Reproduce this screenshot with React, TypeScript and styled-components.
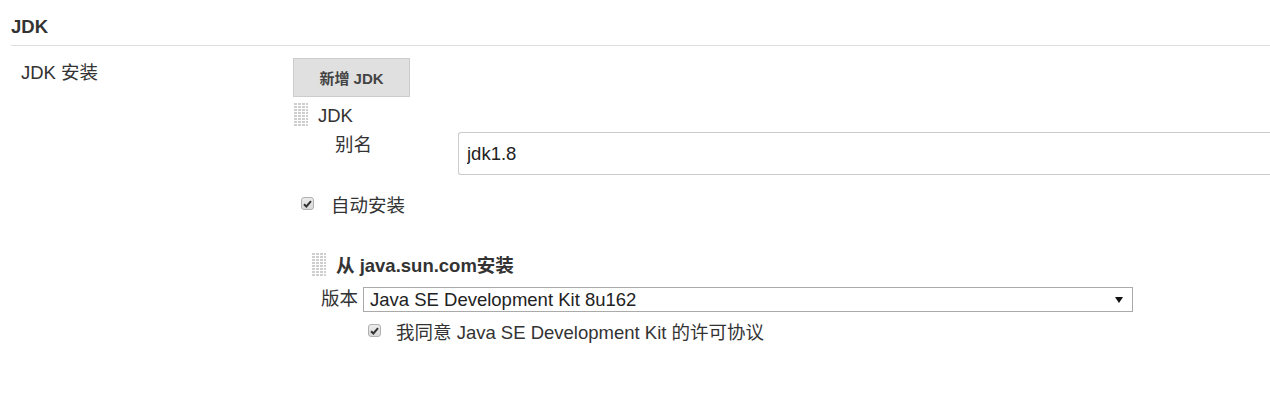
import React from "react";
import styled, { createGlobalStyle } from "styled-components";

const GlobalStyle = createGlobalStyle`
  html, body {
    margin: 0;
    padding: 0;
    background: #fff;
  }
  body {
    font-family: "Liberation Sans", Arial, "Noto Sans CJK SC", sans-serif;
    font-size: 18.5px;
    color: #333;
    overflow: hidden;
  }
`;

const Page = styled.div`
  width: 1270px;
  height: 414px;
  overflow: hidden;
`;

const SectionHeader = styled.div`
  margin-left: 11px;
  height: 46px;
  box-sizing: border-box;
  padding-top: 16px;
  border-bottom: 1px solid #e0e0e0;
  font-size: 18.5px;
  line-height: 21px;
  font-weight: bold;
  color: #333;
`;

const SettingRow = styled.div`
  display: flex;
  padding-top: 12px;
`;

const SettingName = styled.div`
  width: 293px;
  padding-left: 21px;
  box-sizing: border-box;
  padding-top: 4px;
  line-height: 21px;
  flex-shrink: 0;
`;

const SettingBody = styled.div`
  flex: 1;
  display: flex;
  flex-direction: column;
  align-items: flex-start;
`;

const AddButton = styled.button`
  width: 117px;
  height: 39px;
  background: #e0e0e0;
  border: 1px solid #cccccc;
  border-radius: 0;
  font-family: inherit;
  font-size: 15px;
  font-weight: bold;
  color: #444;
  padding: 0;
  cursor: pointer;
`;

const Repeated = styled.div<{ $indent?: number }>`
  align-self: stretch;
  margin-left: ${(p) => p.$indent ?? 0}px;
  display: flex;
  flex-direction: column;
`;

const ChunkHeader = styled.div<{ $bold?: boolean; $top: number }>`
  display: flex;
  align-items: center;
  gap: 10px;
  margin-top: ${(p) => p.$top}px;
  font-weight: ${(p) => (p.$bold ? "bold" : "normal")};
  line-height: 21px;
`;

// dotted grip used to drag a block
const DragHandle = styled.span`
  width: 14px;
  height: 24px;
  flex-shrink: 0;
  background-image: linear-gradient(90deg, transparent 3px, #fff 3px),
    linear-gradient(transparent 2px, #fff 2px);
  background-size: 4px 3px;
  background-color: #cfcfcf;
`;

const FieldRow = styled.div<{ $top: number; $indent: number }>`
  display: flex;
  align-items: flex-start;
  margin-top: ${(p) => p.$top}px;
  padding-left: ${(p) => p.$indent}px;
`;

const FieldLabel = styled.label<{ $width: number; $top: number }>`
  width: ${(p) => p.$width}px;
  padding-top: ${(p) => p.$top}px;
  flex-shrink: 0;
  line-height: 21px;
`;

const TextInput = styled.input`
  flex: 1;
  height: 43px;
  box-sizing: border-box;
  border: 1px solid #cccccc;
  border-right: none;
  border-radius: 3px 0 0 3px;
  padding: 0 8px;
  font-family: inherit;
  font-size: 18.5px;
  color: #222;
  outline: none;
`;

const SelectBox = styled.div`
  width: 770px;
  height: 25px;
  box-sizing: border-box;
  border: 1px solid #aaaaaa;
  display: flex;
  align-items: center;
  justify-content: space-between;
  padding: 0 9px 0 6px;
  font-size: 18.5px;
  color: #222;
`;

const CheckRow = styled.div<{ $top: number; $indent: number; $gap: number }>`
  display: flex;
  align-items: center;
  gap: ${(p) => p.$gap}px;
  margin-top: ${(p) => p.$top}px;
  padding-left: ${(p) => p.$indent}px;
  line-height: 21px;
`;

const CheckBox = styled.span`
  width: 13px;
  height: 13px;
  box-sizing: border-box;
  border: 1px solid #b0b0b0;
  border-radius: 3px;
  background: linear-gradient(#ececec, #d8d8d8);
  display: flex;
  align-items: center;
  justify-content: center;
  flex-shrink: 0;
  position: relative;
  top: -2px;
`;

const Check = () => (
  <CheckBox>
    <svg width="9" height="8" viewBox="0 0 9 8">
      <path d="M1 4.2 L3.4 6.5 L8 1.2" fill="none" stroke="#333" strokeWidth="2" />
    </svg>
  </CheckBox>
);

const Arrow = () => (
  <svg width="8" height="8" viewBox="0 0 8 8">
    <path d="M0 1 H8 L4 7 Z" fill="#111" />
  </svg>
);

export default function App() {
  return (
    <Page>
      <GlobalStyle />
      <SectionHeader>JDK</SectionHeader>
      <SettingRow>
        <SettingName>JDK 安装</SettingName>
        <SettingBody>
          <AddButton>新增 JDK</AddButton>
          <Repeated $indent={1}>
            <ChunkHeader $top={6}>
              <DragHandle />
              <span>JDK</span>
            </ChunkHeader>
            <FieldRow $top={5} $indent={41}>
              <FieldLabel $width={123} $top={2}>别名</FieldLabel>
              <TextInput defaultValue="jdk1.8" />
            </FieldRow>
            <CheckRow $top={20} $indent={7} $gap={17}>
              <Check />
              <span>自动安装</span>
            </CheckRow>
            <Repeated $indent={18}>
              <ChunkHeader $top={37} $bold>
                <DragHandle />
                <span>从 java.sun.com安装</span>
              </ChunkHeader>
              <FieldRow $top={10} $indent={9}>
                <FieldLabel $width={42} $top={1}>版本</FieldLabel>
                <SelectBox>
                  <span>Java SE Development Kit 8u162</span>
                  <Arrow />
                </SelectBox>
              </FieldRow>
              <CheckRow $top={10} $indent={56} $gap={15}>
                <Check />
                <span>我同意 Java SE Development Kit 的许可协议</span>
              </CheckRow>
            </Repeated>
          </Repeated>
        </SettingBody>
      </SettingRow>
    </Page>
  );
}
